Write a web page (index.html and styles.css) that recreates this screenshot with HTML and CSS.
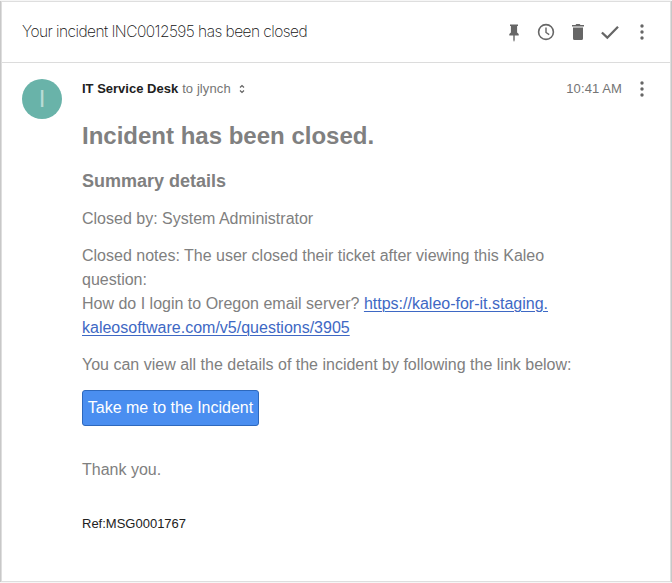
FILE: index.html
```html
<!DOCTYPE html>
<html lang="en">
<head>
<meta charset="utf-8">
<title>Your incident INC0012595 has been closed</title>
<link rel="stylesheet" href="styles.css">
</head>
<body>
<main class="card">
  <header class="topbar">
    <h1 class="subject"><span>Your incident INC0012595 has been closed</span></h1>
    <div class="actions">
      <svg viewBox="0 0 24 24"><path d="M8 4.500h8v1.500h-.9v6.500l1.600 1.500v1.500h-4v4.500L12 22l-.7-2v-4.500h-4V14l1.600-1.500V6H8z"/></svg>
      <svg viewBox="0 0 24 24"><circle cx="12" cy="12" r="7.400" fill="none" stroke="#666" stroke-width="1.600"/><path d="M12 7.500v5l3.200 2.200" fill="none" stroke="#666" stroke-width="1.400"/></svg>
      <svg viewBox="0 0 24 24"><path d="M6 5h3.500l.8-1h3.400l.8 1H18v1.600H6zM7 7.600h10V18.500q0 1.500-1.500 1.500h-7Q7 20 7 18.500z"/></svg>
      <svg viewBox="0 0 24 24"><path d="M3.900 12.500l5.400 5.200L20 6.700" fill="none" stroke="#666" stroke-width="2.300"/></svg>
      <svg viewBox="0 0 24 24"><circle cx="12" cy="6" r="1.700"/><circle cx="12" cy="12" r="1.700"/><circle cx="12" cy="18" r="1.700"/></svg>
    </div>
  </header>
  <article class="message">
    <div class="avatar">I</div>
    <div class="content">
      <div class="meta">
        <span class="sender">IT Service Desk</span>
        <span class="recipient">to jlynch</span>
        <svg class="expand" viewBox="0 0 6 10"><path d="M1 3.500L3 1.500l2 2M1 6.500l2 2 2-2"/></svg>
        <time>10:41 AM</time>
        <svg class="more" viewBox="0 0 24 24"><circle cx="12" cy="6" r="1.700"/><circle cx="12" cy="12" r="1.700"/><circle cx="12" cy="18" r="1.700"/></svg>
      </div>
      <h2><span>Incident has been closed.</span></h2>
      <h3><span>Summary details</span></h3>
      <p>Closed by: System Administrator</p>
      <p class="notes">Closed notes: The user closed their ticket after viewing this Kaleo<br>question:<br>How do I login to Oregon email server? <a href="#">https://kaleo-for-it.staging.<br>kaleosoftware.com/v5/questions/3905</a></p>
      <p class="view">You can view all the details of the incident by following the link below:</p>
      <a class="button" href="#">Take me to the Incident</a>
      <p class="thanks">Thank you.</p>
      <p class="ref">Ref:MSG0001767</p>
    </div>
  </article>
</main>
</body>
</html>
```
FILE: styles.css
```css
* { box-sizing: border-box; }
body {
  margin: 0;
  height: 583px;
  padding: 2px 2px 0;
  overflow: hidden;
  background: #f6f6f6;
  font-family: "Liberation Sans", Arial, sans-serif;
}
.card {
  height: 579px;
  background: #fff;
  box-shadow: 0 0 0 1px #dedede, -1px 0 0 1px #c8c8c8, 1px 0 0 1px #c8c8c8;
}
.topbar {
  display: flex;
  justify-content: space-between;
  height: 61px;
  padding: 0 16px 0 20px;
  border-bottom: 1px solid #dcdcdc;
}
.subject {
  margin: 0;
  font: 200 15.5px/60px Inter, sans-serif;
  letter-spacing: -0.54px;
  color: #111;
}
.actions { display: flex; gap: 8px; padding-top: 18px; }
svg { width: 24px; height: 24px; fill: #666; flex: none; }
.message { display: flex; padding: 16px 16px 0 20px; }
.avatar {
  width: 40px;
  height: 40px;
  border-radius: 50%;
  background: #69b3a9;
  color: #b9dcd7;
  font-size: 24px;
  line-height: 40px;
  text-align: center;
  margin-right: 20px;
}
.content { flex: 1; color: #808080; font-size: 16px; line-height: 24px; }
.meta { display: flex; align-items: center; height: 20px; font-size: 13px; line-height: 20px; }
.sender { font-weight: bold; color: #212121; }
.recipient { margin-left: 4px; color: #757575; letter-spacing: 0.1px; }
.expand { width: 6px; height: 10px; margin-left: 8px; }
.expand path { fill: none; stroke: #616161; stroke-width: 1.2; }
time { margin-left: auto; color: #757575; letter-spacing: 0.1px; }
.more { margin-left: 8px; }
h2 { margin: 22px 0 0; font-size: 24px; line-height: 30px; }
h3 { margin: 18px 0 0; font-size: 18px; line-height: 24px; }
p { margin: 14px 0 0; white-space: nowrap; }
.notes { margin-top: 13px; }
.view { margin-top: 13px; }
p a { color: #3e68c4; text-underline-offset: 2px; text-decoration-thickness: 1px; }
.button {
  display: block;
  width: 177px;
  height: 36px;
  margin-top: 13px;
  border: 1px solid #2d68bd;
  border-radius: 3px;
  background: #4a8ef0;
  color: #fff;
  line-height: 34px;
  text-align: center;
  text-decoration: none;
  white-space: nowrap;
}
.thanks { margin-top: 32px; }
.ref { margin-top: 32px; color: #212121; font-size: 13px; line-height: 20px; }
```
